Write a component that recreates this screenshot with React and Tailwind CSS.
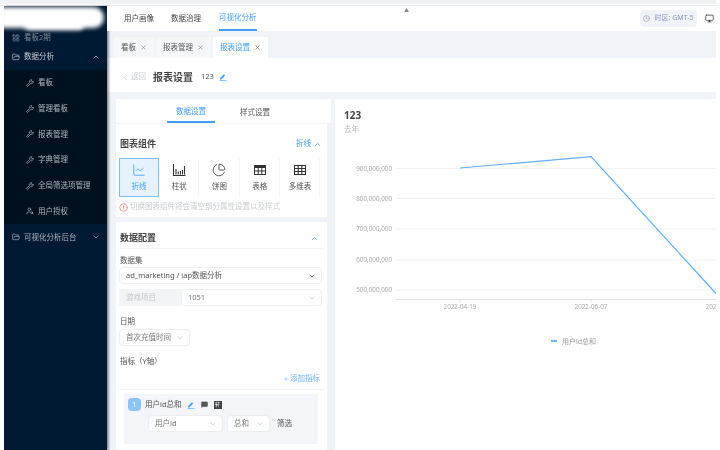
import React from 'react';
import {
  ChartLine, ChartPie, ChevronDown, ChevronLeft, ChevronUp, CircleAlert, Clock,
  FolderOpen, LayoutGrid, MessageSquare, Monitor, Pencil, Plus, UserSearch, Wrench, X,
} from 'lucide-react';

const BarsIcon = ({ className }) => (
  <svg width="14" height="14" viewBox="0 0 14 14" className={className} fill="none" stroke="currentColor" strokeWidth="1.1">
    <path d="M1.5 1v11.5H13.5" />
    <path d="M4 11.5V6M6.3 11.5V8.5M8.4 11.5V8M10.5 11.5V7M12.5 11.5V3" />
  </svg>
);

const TableIcon = ({ className }) => (
  <svg width="14" height="14" viewBox="0 0 14 14" className={className} fill="none" stroke="currentColor" strokeWidth="1">
    <rect x="1.5" y="2.5" width="11" height="9" />
    <rect x="1.5" y="2.5" width="11" height="2" fill="currentColor" />
    <path d="M1.5 8H12.5M5.2 4.5V11.5M8.8 4.5V11.5" />
  </svg>
);

const GridIcon = ({ className }) => (
  <svg width="14" height="14" viewBox="0 0 14 14" className={className} fill="none" stroke="currentColor" strokeWidth="1.1">
    <rect x="1.5" y="2.5" width="11" height="9" />
    <path d="M1.5 5.5H12.5M1.5 8.5H12.5M5.2 2.5V11.5M8.8 2.5V11.5" />
  </svg>
);

// pencil with a base line, as used next to editable names
const EditIcon = ({ className }) => (
  <svg width="8" height="8" viewBox="0 0 8 8" className={className} fill="currentColor">
    <path d="M1 5.2 4.9 1.3l1.3 1.3L2.3 6.5H1z" />
    <path d="M0.5 7.3h7v0.6h-7z" />
  </svg>
);

const subMenu = ['看板', '管理看板', '报表管理', '字典管理', '全局筛选项管理', '用户授权'];
const chartTypes = [
  { label: '折线', icon: ChartLine, active: true },
  { label: '柱状', icon: BarsIcon },
  { label: '饼图', icon: ChartPie },
  { label: '表格', icon: TableIcon },
  { label: '多维表', icon: GridIcon },
];
const yTicks = [
  { label: '900,000,000', y: 18.5 },
  { label: '800,000,000', y: 48.5 },
  { label: '700,000,000', y: 79 },
  { label: '600,000,000', y: 110 },
  { label: '500,000,000', y: 140 },
];

const Sidebar = () => (
  <aside className="relative flex w-[103px] shrink-0 flex-col bg-[#001a33] text-[#aeb6bf] shadow-[2px_0_2px_rgba(0,0,0,0.4)]">
    {/* redacted logo area */}
    <div className="absolute -left-1 top-[1px] h-[21px] w-[104px] rounded-r-2xl bg-white blur-[2px]" />
    <div className="absolute left-[20px] top-[14px] h-[10px] w-[60px] rounded-full bg-white blur-[2px]" />
    <div className="mt-[24px] flex h-[16px] items-center gap-[4px] pl-[8px] text-[7.5px] text-[#7f8b97]">
      <LayoutGrid size={8} />
      看板2期
    </div>
    <div className="mb-[5px] mt-[3px] flex h-[16px] items-center gap-[4px] pl-[8px] text-[7.5px] text-[#c9ced4]">
      <FolderOpen size={8} />
      <span className="flex-1">数据分析</span>
      <ChevronUp size={8} className="mr-[7px]" />
    </div>
    <ul className="bg-[#00101f]">
      {subMenu.map((item, i) => (
        <li key={item} className="flex h-[25.7px] items-center gap-[4px] pl-[22px] text-[7.5px]">
          {i === 5 ? <UserSearch size={8} /> : <Wrench size={8} />}
          {item}
        </li>
      ))}
    </ul>
    <div className="flex h-[26px] items-center gap-[4px] pl-[8px] text-[7.5px]">
      <FolderOpen size={8} />
      <span className="flex-1">可视化分析后台</span>
      <ChevronDown size={8} className="mr-[7px]" />
    </div>
  </aside>
);

const TopNav = () => (
  <div className="relative flex h-[25px] shrink-0 items-stretch bg-white pl-[17px] pr-[2px] text-[7.5px] text-[#444]">
    <div className="flex items-center">用户画像</div>
    <div className="ml-[17px] flex items-center">数据治理</div>
    <div className="ml-[18px] flex items-center border-b-2 border-[#40a0ff] text-[#40a0ff]">可视化分析</div>
    <div className="absolute left-[297px] top-0 text-[5px] leading-[9px] text-[#888]">▲</div>
    <div className="ml-auto flex items-center gap-[8px]">
      <div className="flex h-[17px] w-[57px] items-center justify-center gap-[4px] rounded-sm bg-[#f0f4f9] text-[7px] text-[#8d93b8]">
        <Clock size={7} />
        时区: GMT-5
      </div>
      <Monitor size={9} className="text-[#333]" />
    </div>
  </div>
);

const Tab = ({ label, active, width }) => (
  <div
    className={`flex h-[21px] items-center justify-center gap-[4px] text-[7.5px] ${width} ${
      active ? 'bg-white text-[#40a0ff]' : 'bg-[#f6f7f9] text-[#555]'
    }`}
  >
    {label}
    <X size={7} className="text-[#777]" />
  </div>
);

const SelectBox = ({ children, width, muted }) => (
  <div className={`flex h-[17px] items-center justify-between rounded-sm border border-[#eceef1] bg-white pl-[6px] pr-[5px] text-[7.5px] ${width} ${muted ? 'text-[#777]' : 'text-[#555]'}`}>
    <span>{children}</span>
    <ChevronDown size={8} className={muted ? 'text-[#c4c8cd]' : 'text-[#555]'} />
  </div>
);

const SettingsPanel = () => (
  <div className="flex w-[215px] shrink-0 flex-col overflow-hidden bg-[#f0f4f9]">
    <div className="flex h-[25px] shrink-0 border-b border-[#f3f4f6] bg-white pl-[51px] text-[7.5px] text-[#555]">
      <div className="flex w-[48px] items-center justify-center border-b-2 border-[#40a0ff] pt-[3px] text-[#40a0ff]">数据设置</div>
      <div className="ml-[16px] flex w-[48px] items-center justify-center pt-[3px]">样式设置</div>
    </div>

    <section className="mr-[4px] bg-white px-[3px] pb-[3px]">
      <div className="flex h-[34px] items-center justify-between pl-[1px] pr-[2px] pt-[6px]">
        <h3 className="text-[9px] font-bold text-[#444]">图表组件</h3>
        <span className="flex items-center gap-[2px] text-[7.5px] text-[#40a0ff]">
          折线 <ChevronUp size={9} />
        </span>
      </div>
      <div className="grid w-[201px] grid-cols-5">
        {chartTypes.map(({ label, icon: Icon, active }) => (
          <div
            key={label}
            className={`flex h-[39px] flex-col items-center justify-center gap-[4px] border text-[7.5px] ${
              active ? 'border-[#7fbdfb] bg-[#e6f2ff] text-[#40a0ff]' : 'border-transparent border-r-[#f3f4f6] text-[#555]'
            }`}
          >
            <Icon size={14} strokeWidth={1.4} className={active ? 'text-[#40a0ff]' : 'text-[#333]'} />
            {label}
          </div>
        ))}
      </div>
      <div className="mt-[3px] flex h-[14px] items-center gap-[2px] text-[7.5px] text-[#c9ccd0]">
        <CircleAlert size={9} className="text-[#f0787a]" />
        切换图表组件将会清空部分属性设置以及样式
      </div>
    </section>

    <section className="mr-[4px] mt-[5px] flex-1 bg-white px-[3px]">
      <div className="flex h-[27px] items-center justify-between border-b border-[#f3f4f6] pl-[1px] pr-[5px] pt-[6px]">
        <h3 className="text-[9px] font-bold text-[#444]">数据配置</h3>
        <ChevronUp size={9} className="text-[#40a0ff]" />
      </div>
      <div className="mt-[4px] h-[14px] pl-[1px] text-[7.5px] leading-[14px] text-[#555]">数据集</div>
      <SelectBox width="w-[203px]">ad_marketing / iap数据分析</SelectBox>
      <div className="mt-[5px] flex w-[203px]">
        <div className="flex h-[17px] w-[62px] items-center bg-[#f3f4f6] pl-[7px] text-[7.5px] text-[#c3c6ca]">游戏项目</div>
        <SelectBox width="flex-1" muted>1051</SelectBox>
      </div>
      <div className="mb-[1px] mt-[8px] h-[14px] pl-[1px] text-[7.5px] leading-[14px] text-[#555]">日期</div>
      <SelectBox width="w-[71px]" muted>首次充值时间</SelectBox>
      <div className="mt-[8px] h-[14px] pl-[1px] text-[7.5px] leading-[14px] text-[#555]">指标（Y轴）</div>
      <div className="mt-[4px] flex h-[14px] items-center justify-end gap-[1px] pr-[4px] text-[7.5px] text-[#6db5ff]">
        <Plus size={6} />
        添加指标
      </div>
      <div className="mt-[3px] h-px bg-[#f3f4f6]" />
      <div className="ml-[5px] mt-[4px] h-[50px] w-[194px] bg-[#f3f5f9] pl-[4px] pt-[4px]">
        <div className="flex h-[13px] items-center text-[7.5px] text-[#555]">
          <span className="flex h-[13px] w-[13px] items-center justify-center rounded-sm bg-[#8cc5fd] text-white">1</span>
          <span className="ml-[4px]">用户id总和</span>
          <EditIcon className="ml-[5px] text-[#40a0ff]" />
          <MessageSquare size={7} fill="#555" className="ml-[6px] text-[#555]" />
          <span className="ml-[6px] flex h-[8px] w-[8px] items-center justify-center bg-[#444] text-[5px] text-white">轩</span>
        </div>
        <div className="ml-[20px] mt-[4px] flex items-center gap-[4px]">
          <SelectBox width="w-[75px]" muted>用户id</SelectBox>
          <SelectBox width="w-[43px]" muted>总和</SelectBox>
          <span className="ml-[3px] text-[7.5px] text-[#555]">筛选</span>
        </div>
      </div>
    </section>
  </div>
);

const TrendChart = () => (
  <div className="min-w-0 flex-1 overflow-hidden bg-white pl-[9px] pt-[9px]">
    <div className="text-[10px] font-bold leading-[15px] text-[#444]">123</div>
    <div className="mt-[1px] text-[7.5px] leading-[10px] text-[#b5b8bc]">去年</div>
    <svg width="372" height="210" className="mt-[16px] block">
      {yTicks.map(t => (
        <g key={t.label}>
          <line x1="52" x2="372" y1={t.y} y2={t.y} stroke="#f1f2f3" />
          <text x="48" y={t.y + 2} textAnchor="end" fontSize="6.3" fill="#a8a8a8">{t.label}</text>
        </g>
      ))}
      <line x1="52" x2="372" y1="149.5" y2="149.5" stroke="#dedfe1" />
      {[116, 247].map(x => <line key={x} x1={x} x2={x} y1="149.5" y2="152" stroke="#dedfe1" />)}
      <polyline points="116,18 247,6.7 372,143.5" fill="none" stroke="#5fb0ff" strokeWidth="1.2" />
      <text x="116" y="159" textAnchor="middle" fontSize="6.3" fill="#a8a8a8">2022-04-19</text>
      <text x="247" y="159" textAnchor="middle" fontSize="6.3" fill="#a8a8a8">2022-06-07</text>
      <text x="378" y="159" textAnchor="middle" fontSize="6.3" fill="#a8a8a8">2022-07-26</text>
      <rect x="207" y="190" width="6" height="2" fill="#6db5ff" />
      <text x="218" y="193.5" fontSize="7" fill="#999">用户id总和</text>
    </svg>
  </div>
);

export default function App() {
  return (
    <div className="flex h-[450px] w-[720px] flex-col overflow-hidden bg-white font-['Noto_Sans','Noto_Sans_CJK_SC',sans-serif] blur-[0.45px]">
      <div className="mr-[4px] h-[4px] shrink-0 bg-[#f0f1f3]" />
      <div className="mr-[4px] mt-[1px] h-px shrink-0 bg-[#e6e7e9]" />
      <div className="mx-[4px] flex min-h-0 flex-1">
        <Sidebar />
        <main className="flex min-w-0 flex-1 flex-col overflow-hidden bg-[#f0f4f9]">
          <TopNav />
          <div className="flex h-[27px] shrink-0 items-end gap-[2px] pl-[7px]">
            <Tab label="看板" width="w-[40px]" />
            <Tab label="报表管理" width="w-[55px]" />
            <Tab label="报表设置" width="w-[55px]" active />
          </div>
          <div className="flex h-[34px] shrink-0 items-center bg-white pl-[14px] pt-[4px]">
            <ChevronLeft size={9} className="text-[#c4c7cb]" />
            <span className="ml-[1px] text-[7.5px] text-[#c9ccd0]">返回</span>
            <h1 className="ml-[7px] text-[10px] font-bold text-[#444]">报表设置</h1>
            <span className="ml-[8px] text-[7.5px] text-[#555]">123</span>
            <EditIcon className="ml-[5px] text-[#40a0ff]" />
          </div>
          <div className="mt-[7px] flex min-h-0 flex-1 gap-[4px] pl-[9px]">
            <SettingsPanel />
            <TrendChart />
          </div>
        </main>
      </div>
    </div>
  );
}
